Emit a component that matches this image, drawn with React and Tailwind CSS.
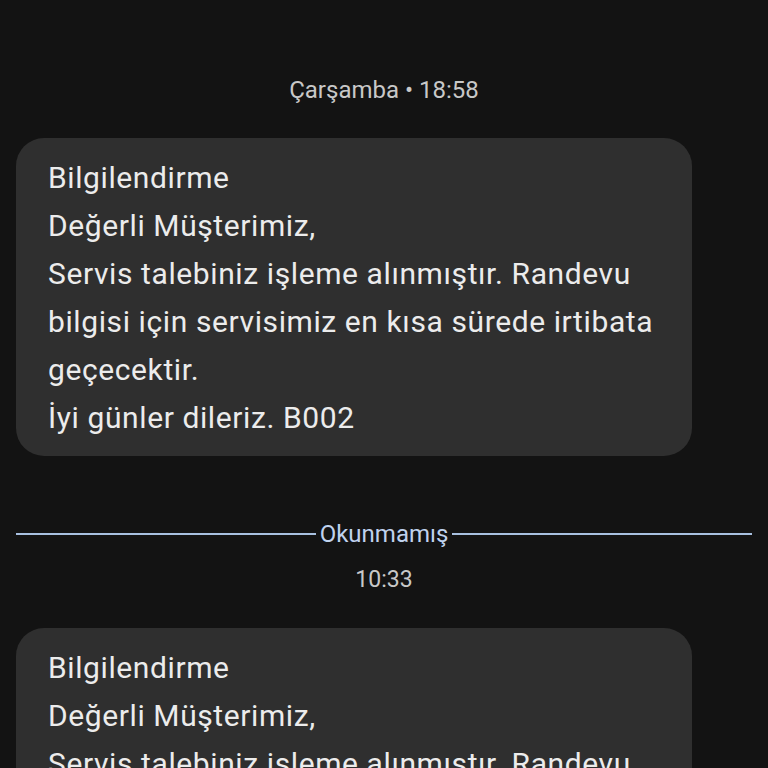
export default function App() {
  const lines = [
    "Bilgilendirme",
    "Değerli Müşterimiz,",
    "Servis talebiniz işleme alınmıştır. Randevu",
    "bilgisi için servisimiz en kısa sürede irtibata",
    "geçecektir.",
    "İyi günler dileriz. B002",
  ];
  const Bubble = () => (
    <div className="w-[676px] rounded-[28px] bg-[#2f2f2f] pl-[32px] pr-4 pt-[16px] pb-[14px]">
      {lines.map((l, i) => (
        <div key={i} className="whitespace-nowrap text-[30px] leading-[48px] text-[#ececec] tracking-[0.6px]">
          {l}
        </div>
      ))}
    </div>
  );
  return (
    <div className="h-[768px] w-[768px] overflow-hidden bg-[#131313] font-['Roboto',sans-serif]">
      <div className="pt-[75px] text-center text-[24px] leading-[30px] text-[#c8c8c8]">
        Çarşamba • 18:58
      </div>
      <div className="mt-[33px] pl-4">
        <Bubble />
      </div>
      <div className="mt-[63px] flex items-center px-4">
        <div className="h-[2px] flex-1 bg-[#a8c0e0]" />
        <div className="px-[4px] text-[24px] leading-[30px] text-[#c0d2ee]">Okunmamış</div>
        <div className="h-[2px] flex-1 bg-[#a8c0e0]" />
      </div>
      <div className="mt-[16px] text-center text-[23px] leading-[30px] text-[#c8c8c8]">10:33</div>
      <div className="mt-[33px] pl-4">
        <Bubble />
      </div>
    </div>
  );
}
